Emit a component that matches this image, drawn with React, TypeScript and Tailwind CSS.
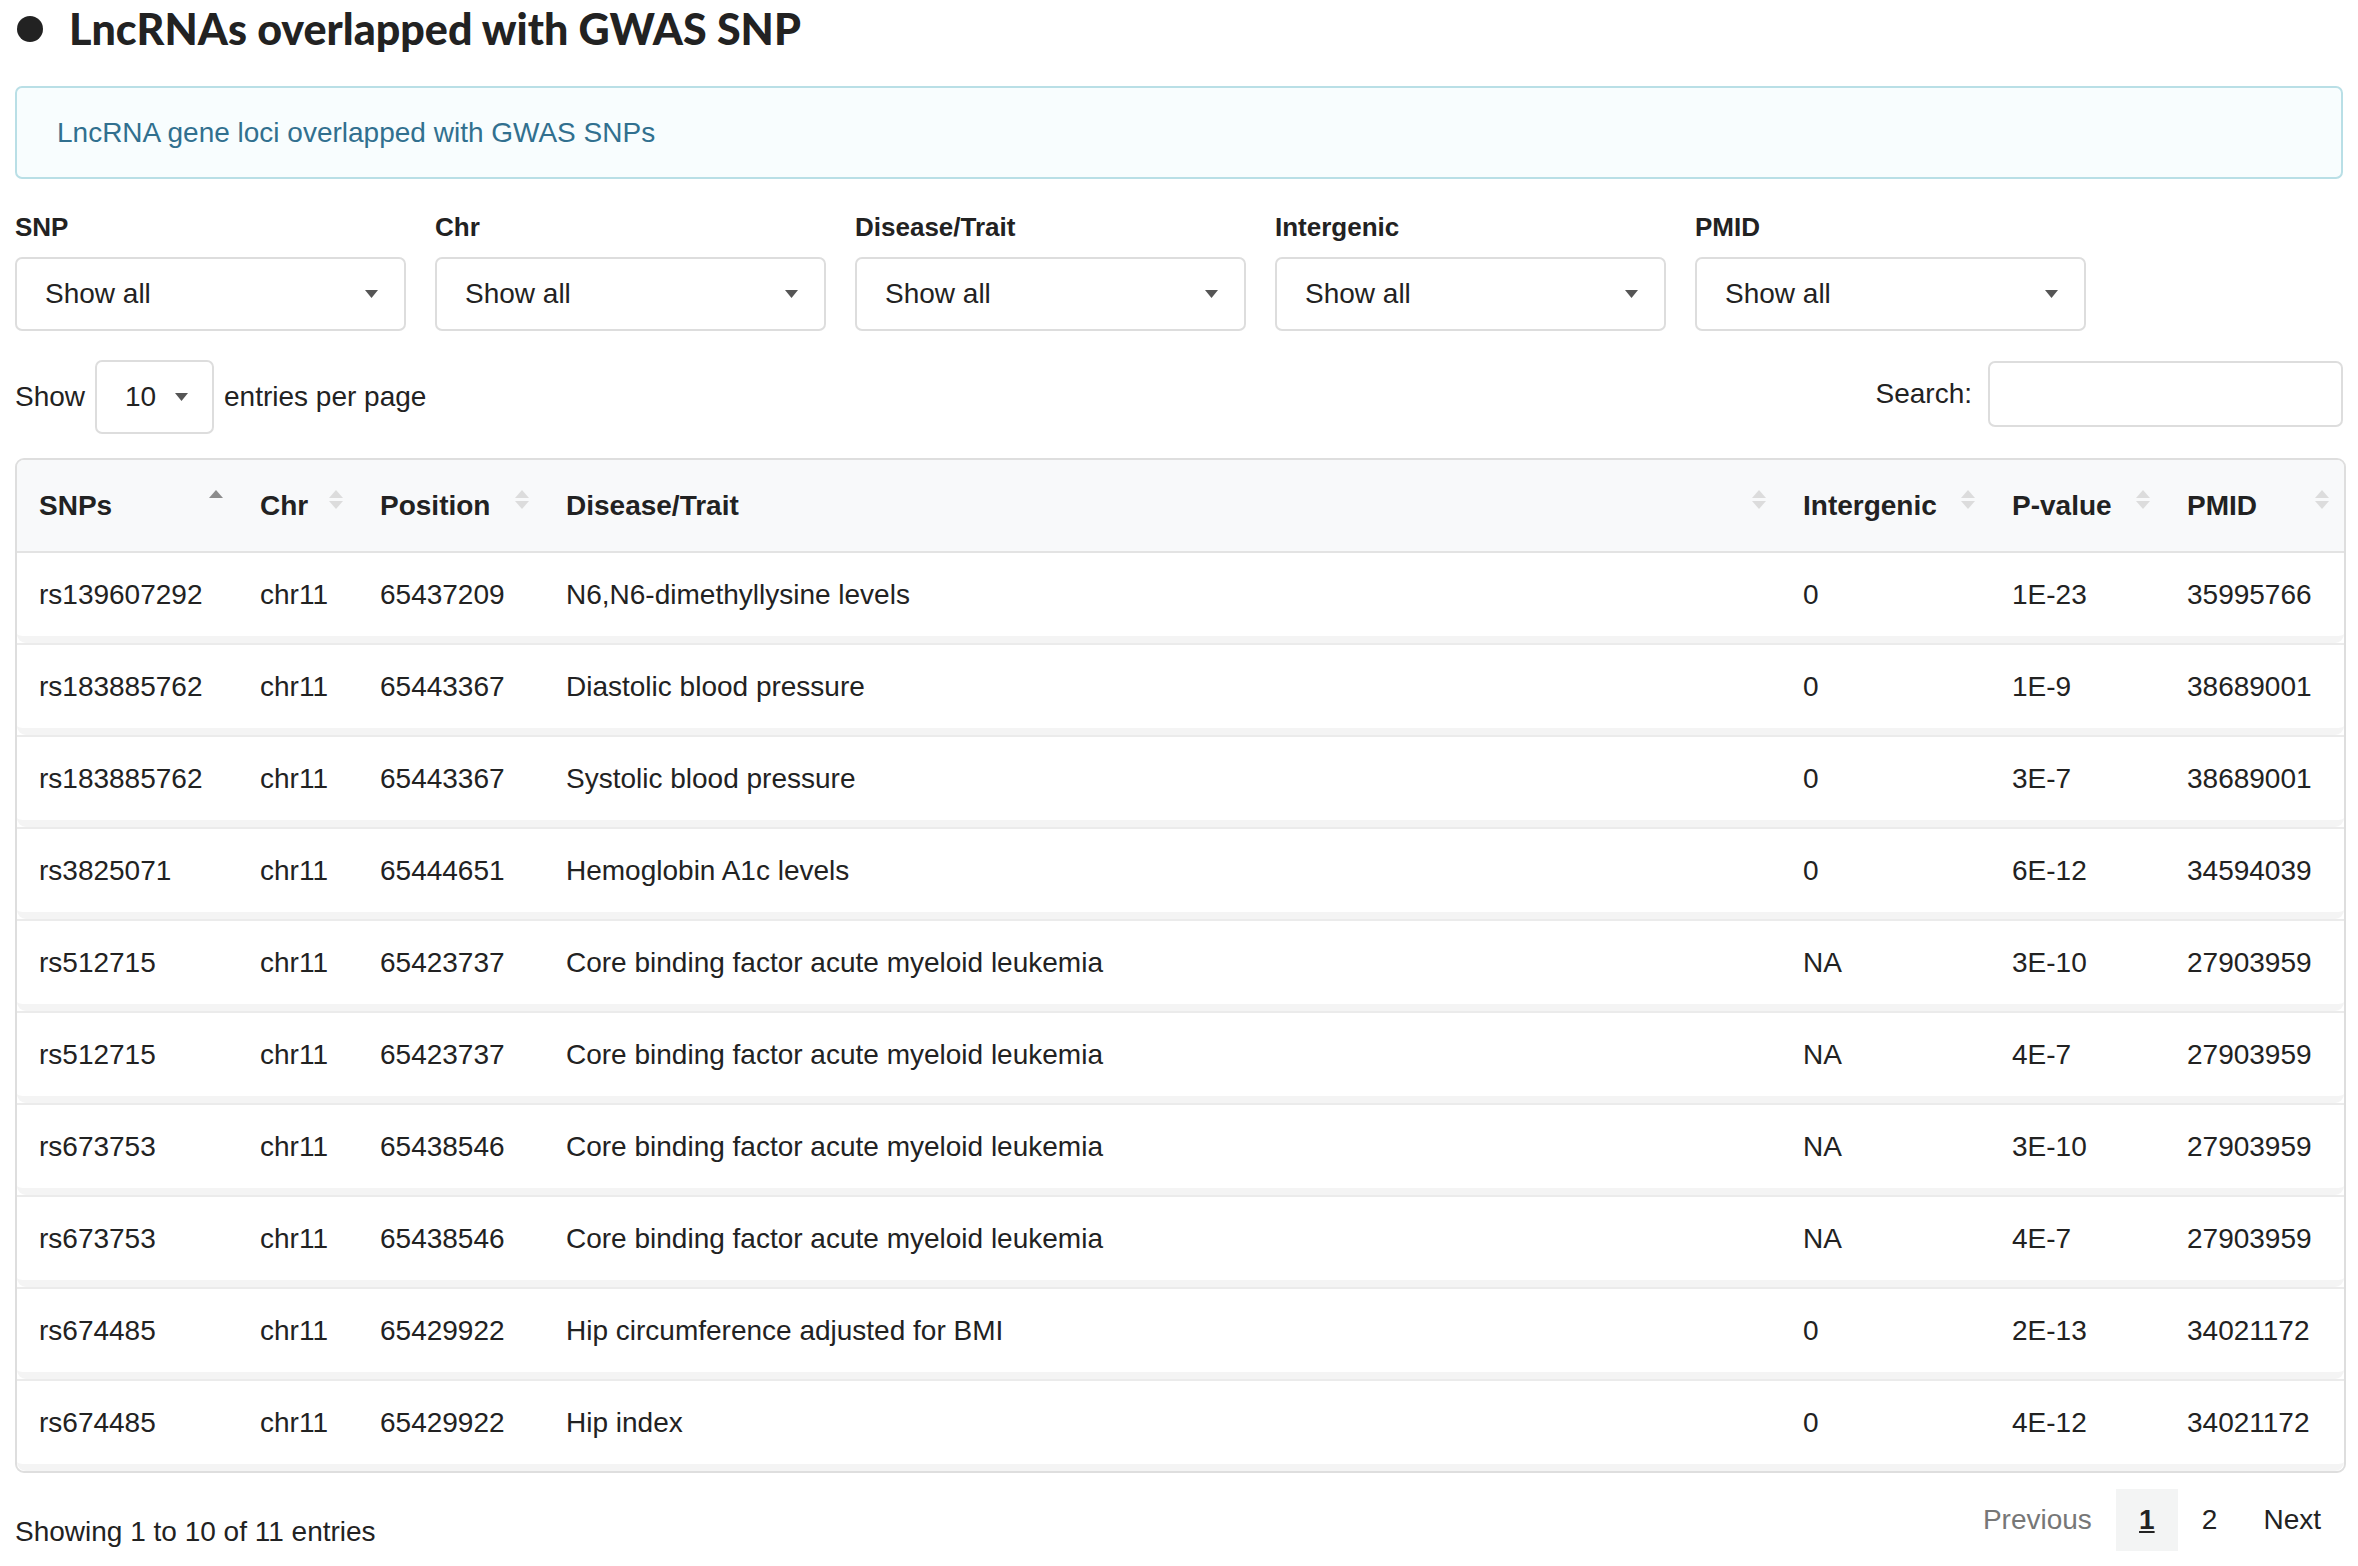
import React from 'react';

const rows = [
  ['rs139607292', 'chr11', '65437209', 'N6,N6-dimethyllysine levels', '0', '1E-23', '35995766'],
  ['rs183885762', 'chr11', '65443367', 'Diastolic blood pressure', '0', '1E-9', '38689001'],
  ['rs183885762', 'chr11', '65443367', 'Systolic blood pressure', '0', '3E-7', '38689001'],
  ['rs3825071', 'chr11', '65444651', 'Hemoglobin A1c levels', '0', '6E-12', '34594039'],
  ['rs512715', 'chr11', '65423737', 'Core binding factor acute myeloid leukemia', 'NA', '3E-10', '27903959'],
  ['rs512715', 'chr11', '65423737', 'Core binding factor acute myeloid leukemia', 'NA', '4E-7', '27903959'],
  ['rs673753', 'chr11', '65438546', 'Core binding factor acute myeloid leukemia', 'NA', '3E-10', '27903959'],
  ['rs673753', 'chr11', '65438546', 'Core binding factor acute myeloid leukemia', 'NA', '4E-7', '27903959'],
  ['rs674485', 'chr11', '65429922', 'Hip circumference adjusted for BMI', '0', '2E-13', '34021172'],
  ['rs674485', 'chr11', '65429922', 'Hip index', '0', '4E-12', '34021172'],
];

const columns = ['SNPs', 'Chr', 'Position', 'Disease/Trait', 'Intergenic', 'P-value', 'PMID'];
const filters = ['SNP', 'Chr', 'Disease/Trait', 'Intergenic', 'PMID'];

const grid = 'grid grid-cols-[221px_120px_186px_1237px_209px_175px_1fr]';

function Caret() {
  return (
    <svg width="13" height="8" viewBox="0 0 13 8" className="shrink-0">
      <path d="M0 0 L13 0 L6.5 8 Z" fill="#555" />
    </svg>
  );
}

function SortIcon({ active }: { active?: boolean }) {
  return (
    <svg width="14" height="19" viewBox="0 0 14 19" className="mb-[12px] shrink-0">
      <path d="M7 0 L14 8 L0 8 Z" fill={active ? '#8c8c8c' : '#dcdcdc'} />
      {!active && <path d="M0 11 L14 11 L7 19 Z" fill="#dcdcdc" />}
    </svg>
  );
}

export default function App() {
  return (
    <div className="w-[2358px] min-h-[1566px] bg-white px-[15px] text-[#222] font-['Liberation_Sans',Arial,sans-serif]">
      {/* heading */}
      <div className="h-[57px] flex items-center">
        <div className="w-[26px] h-[26px] rounded-full bg-[#222] ml-[2px]" />
        <h1 className="ml-[26px] text-[43px] font-black leading-none text-[#222] font-['Lato',sans-serif]">
          LncRNAs overlapped with GWAS SNP
        </h1>
      </div>

      <div className="mt-[29px] h-[93px] flex items-center rounded-[7px] border-2 border-[#b9dfe6] bg-[#f8fdfe] px-[40px]">
        <span className="text-[28px] text-[#31708f]">LncRNA gene loci overlapped with GWAS SNPs</span>
      </div>

      {/* filters */}
      <div className="mt-[33px] flex gap-[29px]">
        {filters.map((f) => (
          <div key={f} className="w-[391px]">
            <div className="text-[26px] font-bold leading-[30px]">{f}</div>
            <div className="mt-[15px] h-[74px] flex items-center justify-between rounded-[7px] border-2 border-[#dddddd] pl-[28px] pr-[26px]">
              <span className="text-[28px]">Show all</span>
              <Caret />
            </div>
          </div>
        ))}
      </div>

      {/* length + search */}
      <div className="mt-[29px] flex items-center justify-between">
        <div className="flex items-center text-[28px]">
          <span>Show</span>
          <div className="ml-[10px] h-[74px] w-[119px] flex items-center rounded-[7px] border-2 border-[#dddddd] pl-[28px]">
            <span>10</span>
            <span className="ml-[19px]">
              <Caret />
            </span>
          </div>
          <span className="ml-[10px]">entries per page</span>
        </div>
        <div className="flex items-center text-[28px] mb-[6px]">
          <span>Search:</span>
          <div className="ml-[16px] h-[66px] w-[355px] rounded-[7px] border-2 border-[#dddddd]" />
        </div>
      </div>

      {/* table */}
      <div className="mt-[24px] w-[2331px] rounded-[9px] border-2 border-[#dedede] overflow-hidden">
        <div className={`${grid} h-[93px] bg-[#f8f9fa] border-b-2 border-[#e3e3e3]`}>
          {columns.map((c, i) => (
            <div key={c} className="flex items-center justify-between pl-[22px] pr-[15px]">
              <span className="text-[28px] font-bold">{c}</span>
              <SortIcon active={i === 0} />
            </div>
          ))}
        </div>
        {rows.map((r, ri) => (
          <div key={ri} className={ri < rows.length - 1 ? 'border-b-2 border-[#ebebeb]' : ''}>
            <div className={`${grid} h-[90px] rounded-[9px] border-b-[7px] border-[#f4f4f4] bg-white`}>
              {r.map((v, ci) => (
                <div key={ci} className="flex items-center pl-[22px] text-[28px]">
                  {v}
                </div>
              ))}
            </div>
          </div>
        ))}
      </div>

      {/* footer */}
      <div className="mt-[16px] flex items-start justify-between">
        <div className="mt-[22px] text-[28px]">Showing 1 to 10 of 11 entries</div>
        <div className="flex items-center h-[62px] text-[28px] mr-[22px]">
          <span className="text-[#777]">Previous</span>
          <div className="ml-[24px] w-[62px] h-[62px] flex items-center justify-center bg-[#f3f4f4]">
            <span className="font-bold underline">1</span>
          </div>
          <span className="ml-[24px]">2</span>
          <span className="ml-[46px]">Next</span>
        </div>
      </div>
    </div>
  );
}
